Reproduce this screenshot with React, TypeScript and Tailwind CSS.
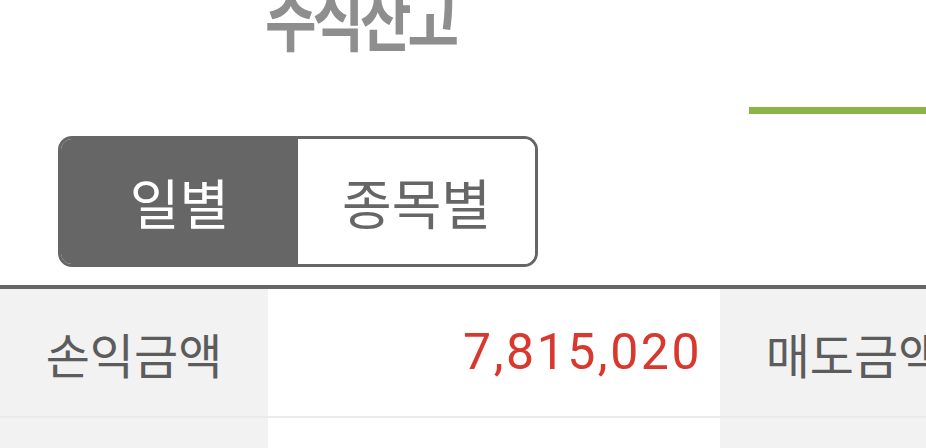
const KR = "font-['Noto_Sans_CJK_KR','Noto_Sans',sans-serif]";

function Segmented() {
  return (
    <div className="ml-[58px] mt-[22px] flex h-[131px] w-[480px] overflow-hidden rounded-[14px] border-[3px] border-[#666666]">
      <button className="flex w-[237px] items-center justify-center bg-[#666666] text-[54px] leading-none text-white">
        일별
      </button>
      <button className="flex flex-1 items-center justify-center bg-white text-[54px] leading-none text-[#666666]">
        종목별
      </button>
    </div>
  );
}

function Row({ label, value, next }: { label: string; value: string; next: string }) {
  return (
    <div className="flex h-[129px] border-b-2 border-[#ebebeb]">
      <div className="flex w-[268px] shrink-0 items-center justify-center bg-[#f2f2f2] text-[48px] text-[#5c5c5c]">
        {label}
      </div>
      <div className="flex w-[452px] shrink-0 items-center justify-end bg-white pr-[18px] font-['Roboto',sans-serif] text-[50px] tracking-[2.5px] text-[#d8382e]">
        {value}
      </div>
      <div className="flex w-[268px] shrink-0 items-center justify-center bg-[#f2f2f2] text-[48px] text-[#5c5c5c]">
        {next}
      </div>
    </div>
  );
}

export default function App() {
  return (
    <div className={`h-[448px] w-[926px] overflow-hidden bg-white ${KR}`}>
      {/* 탭 헤더 */}
      <div className="flex h-[114px]">
        <div className="flex w-[720px] justify-center">
          <span className="-mt-[5px] block h-[56px] origin-bottom scale-y-[1.25] text-[56px] font-bold leading-none tracking-[-4px] text-[#8e8e8e]">
            주식잔고
          </span>
        </div>
        <div className="flex flex-1 items-end pl-[29px]">
          <div className="h-[7px] w-full bg-[#88b545]" />
        </div>
      </div>

      <Segmented />

      <div className="mt-[18px] h-[4px] bg-[#666666]" />

      <Row label="손익금액" value="7,815,020" next="매도금액" />
      <div className="flex h-[40px]">
        <div className="w-[268px] bg-[#f2f2f2]" />
        <div className="w-[452px] bg-white" />
        <div className="flex-1 bg-[#f2f2f2]" />
      </div>
    </div>
  );
}
